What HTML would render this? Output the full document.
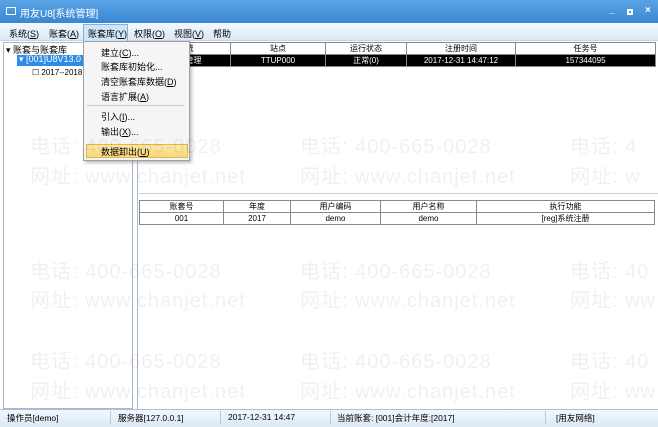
<!DOCTYPE html>
<html><head><meta charset="utf-8">
<style>
*{margin:0;padding:0;box-sizing:border-box}
body{width:658px;height:427px;overflow:hidden;background:#fff;font-family:"Liberation Sans","Noto Sans CJK SC",sans-serif;font-size:9px;color:#000;position:relative}
.abs{position:absolute}
#title{left:0;top:0;width:658px;height:23px;background:linear-gradient(#5aa4e6,#3a86d2);color:#fff;font-size:10px}
#menu{left:0;top:23px;width:658px;height:18px;background:linear-gradient(#f4f9fe,#dbe8f6);border-bottom:1px solid #c6d4e4}
#menu span{position:absolute;top:4px;font-size:9px}
.wm{position:absolute;color:rgba(0,0,0,0.06);font-size:20px;letter-spacing:1px;white-space:nowrap;z-index:5}
.tbl{position:absolute;border-collapse:collapse;font-size:8px;table-layout:fixed}
.tbl td{border:1px solid #888;text-align:center;height:12px;padding:0;white-space:nowrap;overflow:hidden}
#dd{left:83px;top:41px;width:107px;height:120px;background:#f5f5f5;border:1px solid #a0a0a0;box-shadow:2px 2px 3px rgba(0,0,0,.25);font-size:9px}
#dd div{position:absolute;left:17px}
#status{left:0;top:409px;width:658px;height:15px;background:linear-gradient(#f2f7fd,#dfeaf7);border-top:1px solid #aac0da;font-size:8.5px}
#status span{position:absolute;top:2px}
.sep{position:absolute;top:1px;width:1px;height:13px;background:#b8c8dc}
</style></head><body>
<div id="title" class="abs">
 <div class="abs" style="left:6px;top:7px;width:10px;height:8px;border:1px solid #fff"></div>
 <span class="abs" style="left:20px;top:5px">用友U8[系统管理]</span>
 <span class="abs" style="left:609px;top:4px;font-weight:bold">_</span>
 <div class="abs" style="left:627px;top:9px;width:6px;height:6px;border:2px solid #fff"></div>
 <span class="abs" style="left:645px;top:5px;font-weight:bold;font-size:10px">×</span>
</div>
<div id="menu" class="abs">
 <span style="left:9px">系统(<u>S</u>)</span>
 <span style="left:49px">账套(<u>A</u>)</span>
 <div class="abs" style="left:83px;top:1px;width:45px;height:17px;background:#cfe6f8;border:1px solid #7fb2dc;border-bottom:none"></div>
 <span style="left:88px">账套库(<u>Y</u>)</span>
 <span style="left:134px">权限(<u>O</u>)</span>
 <span style="left:174px">视图(<u>V</u>)</span>
 <span style="left:213px">帮助</span>
</div>
<!-- left panel -->
<div class="abs" style="left:3px;top:42px;width:130px;height:367px;border:1px solid #a9b8c8;background:#fff"></div>
<div class="abs" style="left:6px;top:43px;font-size:9px">▾ 账套与账套库</div>
<div class="abs" style="left:17px;top:55px;width:68px;height:11px;background:#2e8be8"></div>
<div class="abs" style="left:19px;top:54px;font-size:9px;color:#fff;white-space:nowrap">▾ [001]U8V13.0</div>
<div class="abs" style="left:32px;top:68px;font-size:8px;white-space:nowrap">☐ 2017--2018</div>
<!-- right panel -->
<div class="abs" style="left:137px;top:42px;width:521px;height:367px;border-left:1px solid #a9b8c8;background:#fff"></div>
<div class="abs" style="left:137px;top:193px;width:521px;height:1px;background:#c8d2dc"></div>
<!-- watermarks -->
<div class="wm" style="left:30px;top:130px">电话: 400-665-0028</div>
<div class="wm" style="left:30px;top:160px">网址: www.chanjet.net</div>
<div class="wm" style="left:300px;top:130px">电话: 400-665-0028</div>
<div class="wm" style="left:300px;top:160px">网址: www.chanjet.net</div>
<div class="wm" style="left:570px;top:130px">电话: 4</div>
<div class="wm" style="left:570px;top:160px">网址: w</div>
<div class="wm" style="left:30px;top:255px">电话: 400-665-0028</div>
<div class="wm" style="left:30px;top:284px">网址: www.chanjet.net</div>
<div class="wm" style="left:300px;top:255px">电话: 400-665-0028</div>
<div class="wm" style="left:300px;top:284px">网址: www.chanjet.net</div>
<div class="wm" style="left:570px;top:255px">电话: 40</div>
<div class="wm" style="left:570px;top:284px">网址: ww</div>
<div class="wm" style="left:30px;top:345px">电话: 400-665-0028</div>
<div class="wm" style="left:30px;top:375px">网址: www.chanjet.net</div>
<div class="wm" style="left:300px;top:345px">电话: 400-665-0028</div>
<div class="wm" style="left:300px;top:375px">网址: www.chanjet.net</div>
<div class="wm" style="left:570px;top:345px">电话: 40</div>
<div class="wm" style="left:570px;top:375px">网址: ww</div>
<!-- top table -->
<table class="tbl" style="left:140px;top:42px;width:516px">
<tr style="background:#fff"><td style="width:90px">系统</td><td style="width:95px">站点</td><td style="width:81px">运行状态</td><td style="width:109px">注册时间</td><td>任务号</td></tr>
<tr style="background:#000;color:#fff"><td>系统管理</td><td>TTUP000</td><td>正常(0)</td><td>2017-12-31 14:47:12</td><td>157344095</td></tr>
</table>
<!-- bottom table -->
<table class="tbl" style="left:139px;top:200px;width:516px">
<tr><td style="width:84px">账套号</td><td style="width:67px">年度</td><td style="width:90px">用户编码</td><td style="width:96px">用户名称</td><td>执行功能</td></tr>
<tr><td>001</td><td>2017</td><td>demo</td><td>demo</td><td>[reg]系统注册</td></tr>
</table>
<!-- dropdown -->
<div id="dd" class="abs">
 <div style="top:4px">建立(<u>C</u>)...</div>
 <div style="top:18px">账套库初始化...</div>
 <div style="top:33px">清空账套库数据(<u>D</u>)</div>
 <div style="top:48px">语言扩展(<u>A</u>)</div>
 <div style="top:63px;left:3px;width:97px;height:1px;background:#c8c8c8"></div>
 <div style="top:68px">引入(<u>I</u>)...</div>
 <div style="top:83px">输出(<u>X</u>)...</div>
 <div style="top:102px;left:2px;width:102px;height:14px;background:linear-gradient(#fde9a8,#f9d77a);border:1px solid #e4b848"></div>
 <div style="top:103px">数据卸出(<u>U</u>)</div>
</div>
<!-- status -->
<div id="status" class="abs">
 <span style="left:7px">操作员[demo]</span><div class="sep" style="left:110px"></div>
 <span style="left:118px">服务器[127.0.0.1]</span><div class="sep" style="left:220px"></div>
 <span style="left:228px">2017-12-31 14:47</span><div class="sep" style="left:330px"></div>
 <span style="left:337px">当前账套: [001]会计年度:[2017]</span><div class="sep" style="left:545px"></div>
 <span style="left:556px">[用友网络]</span>
</div>
<div class="abs" style="left:0;top:424px;width:658px;height:3px;background:#dfeaf7"></div>
</body></html>
